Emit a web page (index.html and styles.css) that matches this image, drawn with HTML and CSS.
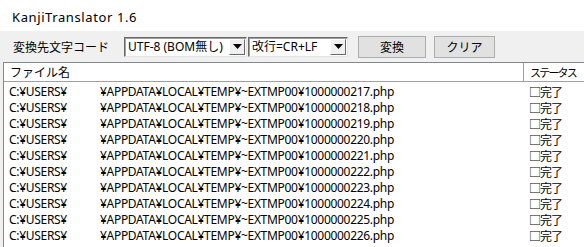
FILE: index.html
```html
<!DOCTYPE html>
<html lang="ja">
<head>
<meta charset="utf-8">
<link rel="stylesheet" href="styles.css">
</head>
<body>
<div class="win">
  <div class="titlebar">KanjiTranslator 1.6</div>
  <div class="client">
    <div class="toolbar">
      <span class="label">変換先文字コード</span>
      <div class="combo c1"><span class="val">UTF-8 (BOM無し)</span><span class="drop"><svg width="9" height="5" viewBox="0 0 9 5"><path d="M0 0H9L4.5 5Z" fill="#000"/></svg></span></div>
      <div class="combo c2"><span class="val">改行=CR+LF</span><span class="drop"><svg width="9" height="5" viewBox="0 0 9 5"><path d="M0 0H9L4.5 5Z" fill="#000"/></svg></span></div>
      <button class="btn b1">変換</button>
      <button class="btn b2">クリア</button>
    </div>
    <div class="list">
      <div class="header">
        <div class="hcol name">ファイル名</div>
        <div class="hcol status">ステータス</div>
      </div>
      <div class="rows">
        <div class="row"><span class="p1">C:¥USERS¥</span><span class="p2">¥APPDATA¥LOCAL¥TEMP¥~EXTMP00¥1000000217.php</span><span class="st">□完了</span></div>
        <div class="row"><span class="p1">C:¥USERS¥</span><span class="p2">¥APPDATA¥LOCAL¥TEMP¥~EXTMP00¥1000000218.php</span><span class="st">□完了</span></div>
        <div class="row"><span class="p1">C:¥USERS¥</span><span class="p2">¥APPDATA¥LOCAL¥TEMP¥~EXTMP00¥1000000219.php</span><span class="st">□完了</span></div>
        <div class="row"><span class="p1">C:¥USERS¥</span><span class="p2">¥APPDATA¥LOCAL¥TEMP¥~EXTMP00¥1000000220.php</span><span class="st">□完了</span></div>
        <div class="row"><span class="p1">C:¥USERS¥</span><span class="p2">¥APPDATA¥LOCAL¥TEMP¥~EXTMP00¥1000000221.php</span><span class="st">□完了</span></div>
        <div class="row"><span class="p1">C:¥USERS¥</span><span class="p2">¥APPDATA¥LOCAL¥TEMP¥~EXTMP00¥1000000222.php</span><span class="st">□完了</span></div>
        <div class="row"><span class="p1">C:¥USERS¥</span><span class="p2">¥APPDATA¥LOCAL¥TEMP¥~EXTMP00¥1000000223.php</span><span class="st">□完了</span></div>
        <div class="row"><span class="p1">C:¥USERS¥</span><span class="p2">¥APPDATA¥LOCAL¥TEMP¥~EXTMP00¥1000000224.php</span><span class="st">□完了</span></div>
        <div class="row"><span class="p1">C:¥USERS¥</span><span class="p2">¥APPDATA¥LOCAL¥TEMP¥~EXTMP00¥1000000225.php</span><span class="st">□完了</span></div>
        <div class="row"><span class="p1">C:¥USERS¥</span><span class="p2">¥APPDATA¥LOCAL¥TEMP¥~EXTMP00¥1000000226.php</span><span class="st">□完了</span></div>
      </div>
    </div>
  </div>
</div>
</body>
</html>
```
FILE: styles.css
```css
html, body {
  margin: 0;
  padding: 0;
  width: 584px;
  height: 247px;
  overflow: hidden;
  background: #f0f0f0;
}
.win {
  font-family: "Noto Sans", "Noto Sans CJK JP", sans-serif;
  font-size: 12px;
  color: #000;
  width: 584px;
  height: 247px;
  display: flex;
  flex-direction: column;
}
.titlebar {
  height: 31px;
  background: #fff;
  padding-left: 12px;
  line-height: 34px;
  font-size: 13px;
  letter-spacing: 0.6px;
  flex: none;
}
.client {
  flex: 1;
  background: #f0f0f0;
  display: flex;
  flex-direction: column;
  padding-left: 3px;
}
.toolbar {
  height: 31px;
  display: flex;
  align-items: center;
  flex: none;
}
.label {
  margin-left: 10px;
  width: 111px;
  font-family: "Noto Sans CJK JP", sans-serif;
  font-size: 12px;
}
.combo {
  height: 20px;
  box-sizing: border-box;
  border-top: 1px solid #696969;
  border-left: 1px solid #696969;
  border-right: 1px solid #e3e3e3;
  border-bottom: 1px solid #e3e3e3;
  background: #fff;
  display: flex;
  align-items: center;
  justify-content: space-between;
  box-shadow: inset 1px 1px 0 #a0a0a0;
}
.c1 { width: 123px; }
.c2 { width: 100px; margin-left: 1px; }
.val {
  padding-left: 3px;
  white-space: nowrap;
  font-size: 12px;
  line-height: 16px;
}
.drop {
  width: 16px;
  height: 16px;
  box-sizing: border-box;
  margin-right: 1px;
  background: #f0f0f0;
  border-top: 1px solid #fff;
  border-left: 1px solid #fff;
  border-right: 1px solid #696969;
  border-bottom: 1px solid #696969;
  display: flex;
  align-items: center;
  justify-content: center;
}
.btn {
  height: 22px;
  font-family: "Noto Sans CJK JP", sans-serif;
  font-size: 12px;
  background: #e1e1e1;
  border: 1px solid #adadad;
  padding: 0;
  margin: 0;
}
.b1 { width: 68px; margin-left: 10px; }
.b2 { width: 61px; margin-left: 8px; }
.list {
  flex: 1;
  border-left: 1px solid #828790;
  border-top: 1px solid #828790;
  background: #fff;
  display: flex;
  flex-direction: column;
}
.header {
  height: 18px;
  display: flex;
  border-bottom: 1px solid #a0a0a0;
  background: #fff;
  flex: none;
}
.hcol {
  font-family: "Noto Sans CJK JP", sans-serif;
  font-size: 12px;
  line-height: 18px;
  white-space: nowrap;
}
.name {
  width: 513px;
  flex: none;
  padding-left: 6px;
  border-right: 1px solid #a0a0a0;
}
.status {
  padding-left: 6px;
  font-size: 11px;
  letter-spacing: -1.8px;
}
.rows {
  padding-top: 2px;
}
.row {
  height: 16px;
  line-height: 16px;
  display: flex;
  white-space: nowrap;
  font-size: 12px;
}
.p1 {
  width: 91px;
  flex: none;
  padding-left: 5px;
  letter-spacing: -0.3px;
}
.p2 {
  width: 428px;
  flex: none;
  letter-spacing: -0.3px;
}
.st {
  font-family: "Noto Sans CJK JP", sans-serif;
  padding-left: 1px;
  letter-spacing: -1px;
}
```
